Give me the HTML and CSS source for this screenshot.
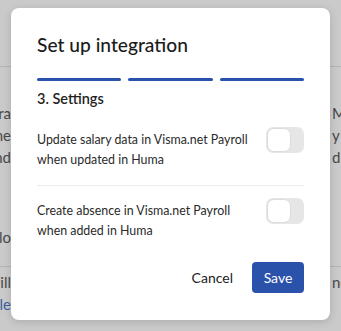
FILE: index.html
```html
<!DOCTYPE html>
<html lang="en">
<head>
  <meta charset="UTF-8" />
  <title>Set up integration</title>
  <link rel="stylesheet" href="styles.css">
</head>
<body>

  <!-- page behind the overlay -->
  <div class="page">
    <div class="page-top"></div>
    <div class="page-body">
      <div class="bg-row"><span class="bg-left">genera</span><span class="bg-right">Man</span></div>
      <div class="bg-row"><span class="bg-left">the</span><span class="bg-right">y to</span></div>
      <div class="bg-row"><span class="bg-left">and</span><span class="bg-right">d.</span></div>
      <div class="bg-row gap"><span class="bg-left">allo</span><span class="bg-right"></span></div>
    </div>
    <div class="page-foot">
      <div class="bg-row"><span class="bg-left">will</span><span class="bg-right">no</span></div>
      <div class="bg-row"><span class="bg-left link">style</span><span class="bg-right"></span></div>
    </div>
  </div>

  <div class="modal">
    <h1>Set up integration</h1>
    <div class="steps">
      <span class="step"></span>
      <span class="step"></span>
      <span class="step"></span>
    </div>
    <h2>3. Settings</h2>

    <div class="option">
      <p>Update salary data in Visma.net Payroll when updated in Huma</p>
      <span class="toggle"><span class="knob"></span></span>
    </div>
    <div class="option last">
      <p>Create absence in Visma.net Payroll when added in Huma</p>
      <span class="toggle"><span class="knob"></span></span>
    </div>

    <div class="actions">
      <button class="btn-cancel">Cancel</button>
      <button class="btn-save">Save</button>
    </div>
  </div>

</body>
</html>
```

FILE: styles.css
```css
* {
  margin: 0; padding: 0; box-sizing: border-box;
  font-family: 'Lato', 'Liberation Sans', sans-serif;
}

body {
  width: 341px;
  height: 331px;
  overflow: hidden;
  background: #cacaca;
  position: relative;
}

/* background page, dimmed by overlay */
.page {
  color: #484848;
  font-size: 15px;
}

.page-top {
  height: 67px;
  border-bottom: 1px solid #b4b4b4;
}

.page-body {
  padding-top: 35px;
}

.bg-row {
  display: flex;
  justify-content: space-between;
  height: 22px;
  line-height: 22px;
}

.bg-row.gap {
  margin-top: 58px;
}

.bg-left {
  width: 20px;
  display: flex;
  justify-content: flex-end;
  overflow: hidden;
  white-space: nowrap;
  padding-right: 9px;
}

.bg-right {
  width: 40px;
  white-space: nowrap;
  overflow: hidden;
  padding-left: 31px;
}

.link {
  color: #3c5fa0;
}

.page-foot {
  margin-top: 18px;
  border-top: 1px solid #b4b4b4;
  padding-top: 4px;
}

/* modal */
.modal {
  position: absolute;
  left: 11px;
  top: 8px;
  width: 319px;
  height: 312px;
  background: #fff;
  border-radius: 8px;
  box-shadow: 0 2px 8px rgba(0, 0, 0, 0.15);
  padding: 26px 26px 0;
  color: #222;
}

.modal h1 {
  font-size: 19.2px;
  font-weight: 500;
  line-height: 24px;
  margin-top: -1px;
  color: #1b1b1b;
}

.steps {
  display: flex;
  gap: 7px;
  margin-top: 21px;
}

.step {
  flex: 1;
  height: 3px;
  border-radius: 2px;
  background: #2a52ab;
}

.modal h2 {
  font-size: 14.5px;
  font-weight: 600;
  line-height: 20px;
  margin-top: 8px;
  color: #1f1f1f;
}

.option {
  display: flex;
  justify-content: space-between;
  align-items: flex-start;
  padding: 21px 0 15px;
  border-bottom: 1px solid #ececec;
}

.option.last {
  padding-top: 15px;
  border-bottom: none;
}

.option p {
  flex: 1;
  font-size: 12.4px;
  line-height: 20px;
  color: #2a2a2a;
  padding-right: 12px;
}

.toggle {
  flex-shrink: 0;
  width: 38px;
  height: 26px;
  border-radius: 7px;
  background: #e6e6e6;
  padding: 1px;
  margin-top: -3px;
}

.knob {
  display: block;
  width: 24px;
  height: 24px;
  border-radius: 7px;
  background: #fff;
  border: 1px solid #dcdcdc;
}

.actions {
  display: flex;
  justify-content: flex-end;
  align-items: center;
  gap: 19px;
  margin-top: 6px;
}

.btn-cancel {
  background: none;
  border: none;
  font-size: 14px;
  color: #222;
}

.btn-save {
  background: #2a52ab;
  color: #fff;
  border: none;
  border-radius: 4px;
  width: 52px;
  height: 31px;
  font-size: 14px;
}
```
